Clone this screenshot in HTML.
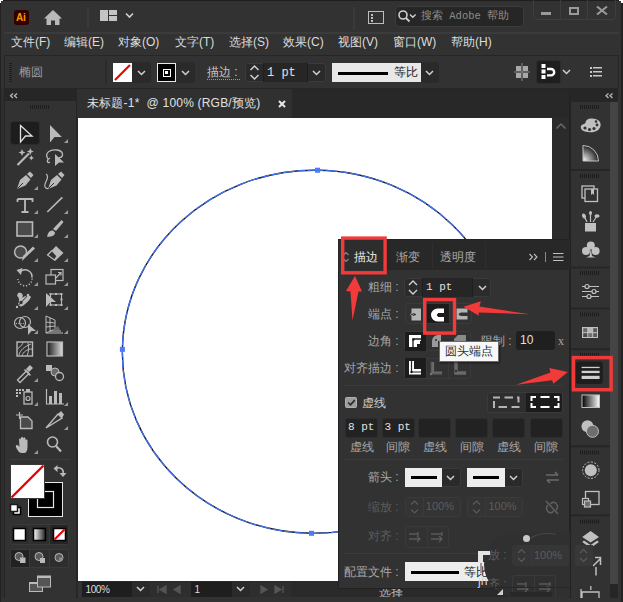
<!DOCTYPE html>
<html><head><meta charset="utf-8">
<style>
*{margin:0;padding:0;box-sizing:border-box}
html,body{width:623px;height:602px;overflow:hidden;background:#2b2b2b;font-family:"Liberation Sans",sans-serif;color:#d0d0d0}
.a{position:absolute}
.t{position:absolute;white-space:nowrap;line-height:1}
</style></head><body>
<!-- window frame -->
<div class="a" style="left:0;top:0;width:623px;height:602px;background:#323232"></div>
<div class="a" style="left:0;top:0;width:623px;height:1px;background:#1e1e1e"></div>
<div class="a" style="left:0;top:0;width:1px;height:602px;background:#222"></div>
<div class="a" style="left:621px;top:0;width:2px;height:602px;background:#222"></div>


<!-- TITLE BAR -->
<div class="a" style="left:14px;top:10px;width:15px;height:15px;background:#330000;border-radius:3px"></div>
<div class="t" style="left:16px;top:12.5px;font-size:10px;font-weight:bold;color:#ff9a00;letter-spacing:-0.3px">Ai</div>
<svg class="a" style="left:43px;top:9px" width="20" height="17" viewBox="0 0 20 17"><path d="M10 1 L19 9.5 L16.5 9.5 L16.5 16 L12 16 L12 11.5 L8 11.5 L8 16 L3.5 16 L3.5 9.5 L1 9.5 Z" fill="#b8b8b8"/></svg>
<div class="a" style="left:87px;top:7px;width:2px;height:20px;background:#3a3a3a"></div>
<div class="a" style="left:100px;top:10px;width:8px;height:11px;background:#c4c4c4"></div>
<div class="a" style="left:109px;top:10px;width:8px;height:5px;background:#c4c4c4"></div>
<div class="a" style="left:109px;top:16px;width:8px;height:5px;background:#c4c4c4"></div>
<svg class="a" style="left:125px;top:12px" width="9" height="7" viewBox="0 0 9 7"><path d="M1 1.5 L4.5 5 L8 1.5" stroke="#d0d0d0" stroke-width="1.6" fill="none"/></svg>
<div class="a" style="left:353px;top:7px;width:2px;height:23px;background:#3a3a3a"></div>
<div class="a" style="left:368px;top:11px;width:16px;height:13px;border:1.5px solid #bdbdbd"></div>
<div class="a" style="left:371px;top:14px;width:2px;height:2px;background:#bdbdbd"></div>
<div class="a" style="left:371px;top:17px;width:2px;height:2px;background:#bdbdbd"></div>
<div class="a" style="left:371px;top:20px;width:2px;height:2px;background:#bdbdbd"></div>
<div class="a" style="left:395px;top:6px;width:129px;height:21px;background:#262626;border:1px solid #3c3c3c;border-radius:4px"></div>
<svg class="a" style="left:397px;top:9px" width="20" height="15" viewBox="0 0 20 15"><circle cx="6" cy="6" r="4" stroke="#cfcfcf" stroke-width="1.6" fill="none"/><path d="M9 9 L12.5 12.5" stroke="#cfcfcf" stroke-width="1.8"/><path d="M13 5.5 L15.8 8.3 L18.6 5.5" stroke="#cfcfcf" stroke-width="1.4" fill="none"/></svg>
<div class="t" style="left:421px;top:11px;font-family:'Liberation Mono',monospace;font-size:10.5px;color:#8c8c8c">搜索 Adobe 帮助</div>
<div class="a" style="left:533px;top:-2px;width:83px;height:22px;border:1px solid #3e3e3e;border-radius:0 0 4px 4px"></div>
<div class="a" style="left:560px;top:0;width:1px;height:19px;background:#3e3e3e"></div>
<div class="a" style="left:587px;top:0;width:1px;height:19px;background:#3e3e3e"></div>
<div class="a" style="left:541px;top:12px;width:10px;height:3px;background:#9a9a9a"></div>
<div class="a" style="left:569px;top:7px;width:10px;height:8px;border:2px solid #9a9a9a"></div>
<svg class="a" style="left:596px;top:6px" width="12" height="9" viewBox="0 0 12 9"><path d="M1 0.5 L11 8.5 M11 0.5 L1 8.5" stroke="#9a9a9a" stroke-width="2"/></svg>

<!-- MENU -->
<div class="t" style="left:11px;top:36px;font-size:12px;color:#dcdcdc">文件(F)</div>
<div class="t" style="left:64px;top:36px;font-size:12px;color:#dcdcdc">编辑(E)</div>
<div class="t" style="left:118px;top:36px;font-size:12px;color:#dcdcdc">对象(O)</div>
<div class="t" style="left:175px;top:36px;font-size:12px;color:#dcdcdc">文字(T)</div>
<div class="t" style="left:229px;top:36px;font-size:12px;color:#dcdcdc">选择(S)</div>
<div class="t" style="left:283px;top:36px;font-size:12px;color:#dcdcdc">效果(C)</div>
<div class="t" style="left:338px;top:36px;font-size:12px;color:#dcdcdc">视图(V)</div>
<div class="t" style="left:393px;top:36px;font-size:12px;color:#dcdcdc">窗口(W)</div>
<div class="t" style="left:451px;top:36px;font-size:12px;color:#dcdcdc">帮助(H)</div>

<!-- title separator -->
<div class="a" style="left:4px;top:32px;width:615px;height:2px;background:#3b3b3b"></div>

<!-- control bar -->
<div class="a" style="left:4px;top:55px;width:615px;height:34px;background:#323232;border:1px solid #262626"></div>


<!-- CONTROL BAR -->
<div class="a" style="left:9px;top:63px;width:3px;height:19px;background:repeating-linear-gradient(#1e1e1e 0 1px,transparent 1px 2px)"></div>
<div class="t" style="left:19px;top:66px;font-size:12px;color:#9c9c9c">椭圆</div>
<div class="a" style="left:105px;top:60px;width:2px;height:24px;background:#2a2a2a"></div>
<div class="a" style="left:113px;top:63px;width:19px;height:19px;background:#fff;overflow:hidden"><svg width="19" height="19"><path d="M2 17 L17 2" stroke="#e00" stroke-width="2.2"/></svg></div>
<div class="a" style="left:132px;top:62px;width:19px;height:21px;background:#2a2a2a;border-radius:0 3px 3px 0"></div>
<svg class="a" style="left:137px;top:70px" width="9" height="6" viewBox="0 0 9 6"><path d="M1 1 L4.5 4.5 L8 1" stroke="#d0d0d0" stroke-width="1.5" fill="none"/></svg>
<div class="a" style="left:157px;top:63px;width:19px;height:19px;background:#000;border:1px solid #e8e8e8"></div>
<div class="a" style="left:162.5px;top:68.5px;width:8.5px;height:8.5px;border:1.5px solid #fff"></div>
<div class="a" style="left:165.3px;top:71.3px;width:3px;height:3px;background:#fff"></div>
<div class="a" style="left:176px;top:62px;width:19px;height:21px;background:#2a2a2a;border-radius:0 3px 3px 0"></div>
<svg class="a" style="left:181px;top:70px" width="9" height="6" viewBox="0 0 9 6"><path d="M1 1 L4.5 4.5 L8 1" stroke="#d0d0d0" stroke-width="1.5" fill="none"/></svg>
<div class="t" style="left:207px;top:66px;font-size:12px;color:#c8c8c8">描边 :</div>
<div class="a" style="left:207px;top:79px;width:33px;height:1px;background:repeating-linear-gradient(90deg,#9a9a9a 0 1px,transparent 1px 2px)"></div>
<div class="a" style="left:245px;top:63px;width:81px;height:19px;background:#2a2a2a;border:1px solid #3a3a3a;border-radius:3px"></div>
<div class="a" style="left:263px;top:63px;width:45px;height:19px;background:#262626;border-left:1px solid #1e1e1e;border-right:1px solid #1e1e1e"></div>
<svg class="a" style="left:249px;top:64px" width="11" height="17" viewBox="0 0 11 17"><path d="M1.5 6 L5.5 2 L9.5 6 M1.5 11 L5.5 15 L9.5 11" stroke="#d0d0d0" stroke-width="1.5" fill="none"/></svg>
<div class="t" style="left:267px;top:67px;font-family:'Liberation Mono',monospace;font-size:12px;color:#e0e0e0">1 pt</div>
<svg class="a" style="left:312px;top:70px" width="9" height="6" viewBox="0 0 9 6"><path d="M1 1 L4.5 4.5 L8 1" stroke="#d0d0d0" stroke-width="1.5" fill="none"/></svg>
<div class="a" style="left:332px;top:63px;width:89px;height:19px;background:#e8e8e8"></div>
<div class="a" style="left:338px;top:72px;width:50px;height:3px;background:#000"></div>
<div class="t" style="left:394px;top:66px;font-size:12px;color:#222">等比</div>
<div class="a" style="left:421px;top:62px;width:18px;height:21px;background:#2a2a2a;border-radius:0 3px 3px 0"></div>
<svg class="a" style="left:425px;top:70px" width="9" height="6" viewBox="0 0 9 6"><path d="M1 1 L4.5 4.5 L8 1" stroke="#d0d0d0" stroke-width="1.5" fill="none"/></svg>
<svg class="a" style="left:513px;top:62px" width="18" height="20" viewBox="0 0 18 20"><rect x="3" y="4" width="5" height="5" fill="#a8a8a8"/><rect x="10" y="4" width="5" height="5" fill="#a8a8a8"/><rect x="3" y="11" width="5" height="5" fill="#a8a8a8"/><rect x="10" y="11" width="5" height="5" fill="#a8a8a8"/><path d="M9 1 V19 M1 10 H17" stroke="#8a8a8a" stroke-width="1"/></svg>
<div class="a" style="left:535.5px;top:59.5px;width:25px;height:24.5px;background:#1e1e1e;border:1px solid #2c2c2c;border-radius:3px"></div>
<svg class="a" style="left:540px;top:63px" width="18" height="17" viewBox="0 0 18 17"><rect x="1.5" y="1" width="4" height="4" fill="#fff"/><rect x="1.5" y="6.5" width="4" height="4" fill="#fff"/><rect x="1.5" y="12" width="4" height="4" fill="#fff"/><path d="M7 6 H11 A3.2 3.2 0 0 1 11 12.4 H7" stroke="#fff" stroke-width="2.4" fill="none"/></svg>
<svg class="a" style="left:562px;top:69px" width="9" height="6" viewBox="0 0 9 6"><path d="M1 1 L4.5 4.5 L8 1" stroke="#d0d0d0" stroke-width="1.5" fill="none"/></svg>
<svg class="a" style="left:590px;top:66px" width="12" height="11" viewBox="0 0 12 11"><rect x="0" y="1" width="2" height="2" fill="#c8c8c8"/><rect x="0" y="5" width="2" height="2" fill="#c8c8c8"/><rect x="0" y="9" width="2" height="2" fill="#c8c8c8"/><rect x="3" y="1" width="9" height="1.5" fill="#c8c8c8"/><rect x="3" y="5" width="9" height="1.5" fill="#c8c8c8"/><rect x="3" y="9" width="9" height="1.5" fill="#c8c8c8"/></svg>

<!-- toolbar -->
<div class="a" style="left:1px;top:89px;width:3px;height:509px;background:#2e2e2e"></div>
<div class="a" style="left:4px;top:89px;width:72px;height:509px;background:#323232;border-left:1px solid #262626"></div>
<div class="a" style="left:4px;top:89px;width:72px;height:12px;background:#262626"></div>


<!-- TOOLBAR ICONS -->
<svg class="a" style="left:0;top:0" width="80" height="602" viewBox="0 0 80 602">
<path d="M13 93.5 L10.5 95.8 L13 98 M17 93.5 L14.5 95.8 L17 98" fill="none" stroke="#b8b8b8" stroke-width="1.3"/>
<g fill="#1e1e1e"><rect x="30" y="105" width="1" height="4"/><rect x="32" y="105" width="1" height="4"/><rect x="34" y="105" width="1" height="4"/><rect x="36" y="105" width="1" height="4"/><rect x="38" y="105" width="1" height="4"/><rect x="40" y="105" width="1" height="4"/><rect x="42" y="105" width="1" height="4"/><rect x="44" y="105" width="1" height="4"/><rect x="46" y="105" width="1" height="4"/><rect x="48" y="105" width="1" height="4"/></g>
<rect x="10.5" y="121.5" width="29" height="23" rx="3" fill="#1d1d1d" stroke="#2c2c2c"/><path d="M20.5 125.5 L32 136 L25.5 136 L20.5 142 Z" fill="none" stroke="#e0e0e0" stroke-width="1.3" stroke-linejoin="miter"/><path d="M50 125 L61.8 137 L54.5 137 L50 142.5 Z" fill="#bababa"/><path d="M68 143 L68 139 L64 143 Z" fill="#9a9a9a"/><path d="M17.5 165 L29 153.5" stroke="#bababa" stroke-width="2.2"/><path d="M22 149 l1 2.5 2.5 1 -2.5 1 -1 2.5 -1 -2.5 -2.5 -1 2.5 -1z M30.3 148 l1 2.5 2.5 1 -2.5 1 -1 2.5 -1 -2.5 -2.5 -1 2.5 -1z M31.4 155.3 l0.8 1.8 1.8 0.8 -1.8 0.8 -0.8 1.8 -0.8 -1.8 -1.8 -0.8 1.8 -0.8z" fill="#bababa"/><path d="M48 159 C44 153 50 149 57 150 C64 151 64 157 59 158" fill="none" stroke="#bababa" stroke-width="1.3"/><path d="M50 158 C46 160 47 164 50 162" fill="none" stroke="#bababa" stroke-width="1.3"/><path d="M55 154 L64 162.5 L59 162.5 L55 166 Z" fill="#bababa"/><g transform="translate(0,0)"><path d="M17 189 L20 180 L26 175 L30.5 179.5 L25.5 185.5 Z" fill="#bababa"/><path d="M27 174 L30 171.5 L33.5 175 L31 178 Z" fill="#bababa"/><path d="M17.5 188.5 L23 183" stroke="#323232" stroke-width="1"/></g><path d="M38 190 L38 186 L34 190 Z" fill="#9a9a9a"/><g transform="translate(31,0)"><path d="M17 189 L20 180 L26 175 L30.5 179.5 L25.5 185.5 Z" fill="#bababa"/><path d="M27 174 L30 171.5 L33.5 175 L31 178 Z" fill="#bababa"/><path d="M17.5 188.5 L23 183" stroke="#323232" stroke-width="1"/></g><path d="M46 174 C50 176 46 181 45 184 C44 187 46 189 48.5 188.5" fill="none" stroke="#bababa" stroke-width="1.2"/><path d="M17.5 199 H32.5 V202 M17.5 199 V202 M25 199 V212 M21.5 212 H28.5" fill="none" stroke="#bababa" stroke-width="1.8"/><path d="M38 214 L38 210 L34 214 Z" fill="#9a9a9a"/><path d="M47.3 212 L62.3 197.4" stroke="#bababa" stroke-width="1.6"/><path d="M68 214 L68 210 L64 214 Z" fill="#9a9a9a"/><rect x="17" y="222" width="15.5" height="14" fill="#4a4a4a" stroke="#bababa" stroke-width="1.6"/><path d="M38 238 L38 234 L34 238 Z" fill="#9a9a9a"/><path d="M53 229 L61.5 220 L63.5 222 L56 231 Z" fill="#bababa"/><path d="M47 236.8 C48 232 50 230 53 230.5 L55 232.5 C55 236 51 237 47 236.8 Z" fill="#bababa"/><path d="M68 238 L68 234 L64 238 Z" fill="#9a9a9a"/><circle cx="20.6" cy="252" r="6" fill="#4a4a4a" stroke="#bababa" stroke-width="1.5"/><path d="M22 261 L23 256 L33 246.5 L35 248.5 L25 258 Z" fill="#bababa"/><path d="M38 262 L38 258 L34 262 Z" fill="#9a9a9a"/><path d="M47.5 255 L56 246 L63.5 253 L55 261 Z" fill="#bababa"/><path d="M47.5 255 L52 250.5 L57 256 L54.5 260 Z" fill="#323232" stroke="#bababa" stroke-width="1.2"/><path d="M68 262 L68 258 L64 262 Z" fill="#9a9a9a"/><path d="M20.5 271.5 A7 7 0 0 1 32 277.5" fill="none" stroke="#bababa" stroke-width="1.6"/><path d="M32 278.5 A7 7 0 0 1 18 279" fill="none" stroke="#bababa" stroke-width="1.5" stroke-dasharray="1.2 1.8"/><path d="M16.5 270 L22.5 268 L21 275 Z" fill="#bababa"/><path d="M38 286 L38 282 L34 286 Z" fill="#9a9a9a"/><rect x="51" y="269.5" width="12" height="11" fill="none" stroke="#bababa" stroke-width="1.2"/><rect x="46" y="275" width="9.5" height="9" fill="#323232" stroke="#bababa" stroke-width="1.2"/><path d="M56 278 L61 272.5 M58 272.5 H61 V275.5" fill="none" stroke="#bababa" stroke-width="1.2"/><path d="M68 286 L68 282 L64 286 Z" fill="#9a9a9a"/><path d="M18 293 C22 292 24 295 22 298 C25 296 29 294 31 297 C30 299 28 302 24 305 C22 307 19 307 18 304 C20 301 19 297 17 296 Z" fill="#bababa"/><path d="M17 307 L28 295" stroke="#323232" stroke-width="1"/><circle cx="21" cy="302.5" r="1.7" fill="#323232"/><circle cx="17" cy="307" r="1.2" fill="#bababa"/><circle cx="28" cy="295" r="1.2" fill="#bababa"/><path d="M38 310 L38 306 L34 310 Z" fill="#9a9a9a"/><path d="M46 293 L56 302 L50.5 302 L46 307 Z" fill="#bababa"/><rect x="50.5" y="294" width="11" height="11" fill="none" stroke="#bababa" stroke-width="1.1"/><g fill="#bababa"><rect x="49.5" y="293" width="2" height="2"/><rect x="60.5" y="293" width="2" height="2"/><rect x="49.5" y="304" width="2" height="2"/><rect x="60.5" y="304" width="2" height="2"/><rect x="55" y="293" width="2" height="2"/><rect x="55" y="304" width="2" height="2"/><rect x="60.5" y="298.5" width="2" height="2"/></g><path d="M68 310 L68 306 L64 310 Z" fill="#9a9a9a"/><circle cx="20" cy="323" r="5.5" fill="none" stroke="#bababa" stroke-width="1.2"/><circle cx="25" cy="322" r="5.5" fill="none" stroke="#bababa" stroke-width="1.2"/><path d="M16 323.5 H26" stroke="#bababa" stroke-width="1" stroke-dasharray="1 1.3"/><path d="M28 324 L36 331 L31.5 331 L28 335 Z" fill="#bababa"/><path d="M38 334 L38 330 L34 334 Z" fill="#9a9a9a"/><path d="M46 316 L55 320 L55 329 L46 333 Z M46 322 L55 323 M46 327 L55 326 M50 318 V331" fill="none" stroke="#bababa" stroke-width="1"/><path d="M52 330 L60 330 L58 326 Z" fill="#6a6a6a"/><path d="M46 333 H63 M50 331 H61" stroke="#bababa" stroke-width="1"/><path d="M68 334 L68 330 L64 334 Z" fill="#9a9a9a"/><rect x="17" y="342" width="15.5" height="14" fill="none" stroke="#bababa" stroke-width="1.4"/><path d="M19 355 C20 350 24 347 31 344 M17.5 349 C21 346 23 344 23 342 M22 356 C23 352 27 349 32 349 M28 343 C29 347 29 351 27 356" fill="none" stroke="#bababa" stroke-width="1"/><defs><linearGradient id="gr" x1="0" x2="1"><stop offset="0" stop-color="#1a1a1a"/><stop offset="1" stop-color="#dcdcdc"/></linearGradient></defs><rect x="47" y="342" width="15.5" height="14" fill="url(#gr)" stroke="#bababa" stroke-width="1.2"/><path d="M17.5 380 L26.5 371 L29 373.5 L20 382.5 Z" fill="none" stroke="#bababa" stroke-width="1.3"/><path d="M26 369 L30 365 L33 368 L29 372 Z" fill="#bababa"/><path d="M24.5 369.5 L30.5 375.5" stroke="#bababa" stroke-width="1.5"/><path d="M38 382 L38 378 L34 382 Z" fill="#9a9a9a"/><rect x="46" y="365" width="6" height="6" fill="#bababa"/><circle cx="55" cy="372" r="4" fill="#6a6a6a" stroke="#bababa" stroke-width="1"/><circle cx="59.5" cy="376.5" r="4" fill="#323232" stroke="#bababa" stroke-width="1.3"/><g fill="#bababa"><rect x="16" y="389" width="2" height="2"/><rect x="19" y="389" width="2" height="2"/><rect x="22" y="389" width="2" height="2"/><rect x="16" y="392" width="2" height="2"/><rect x="19" y="392" width="2" height="2"/><rect x="16" y="395" width="2" height="2"/></g><rect x="24" y="392" width="8" height="12" fill="none" stroke="#bababa" stroke-width="1.3"/><rect x="26" y="389" width="4" height="3" fill="#bababa"/><circle cx="28" cy="398.5" r="2" fill="none" stroke="#bababa" stroke-width="1.2"/><path d="M38 406 L38 402 L34 406 Z" fill="#9a9a9a"/><path d="M46.5 389 V404 H64" fill="none" stroke="#bababa" stroke-width="1.2"/><rect x="49" y="396" width="3" height="8" fill="#bababa"/><rect x="54" y="391" width="3" height="13" fill="#bababa"/><rect x="59" y="393" width="3" height="11" fill="#bababa"/><path d="M68 406 L68 402 L64 406 Z" fill="#9a9a9a"/><path d="M16 415 H23 M19.5 412 V419" stroke="#bababa" stroke-width="1.2"/><path d="M20.5 417 H28 L32 421 V428.5 H20.5 Z" fill="#4a4a4a" stroke="#bababa" stroke-width="1.3"/><path d="M46 428 L58 414 L62 418 Z" fill="none" stroke="#bababa" stroke-width="1.4"/><path d="M58 414 L61 411 L64 414.5 L62 418 Z" fill="#bababa"/><path d="M68 430 L68 426 L64 430 Z" fill="#9a9a9a"/><path d="M19 452 C16 448 15 446 16.5 445 C18 444.5 19 446 19.5 447 L19 439.5 C19 438 21 438 21 439.5 V444 V438 C21 436.5 23.3 436.5 23.3 438 V444 V438.7 C23.3 437.2 25.5 437.2 25.5 438.7 V445 V440.5 C25.5 439 27.5 439 27.5 440.5 V447 C27.5 451 26 453 24 453 H21 Z" fill="#bababa"/><path d="M38 454 L38 450 L34 454 Z" fill="#9a9a9a"/><circle cx="52.5" cy="442" r="5" fill="none" stroke="#bababa" stroke-width="1.6"/><path d="M56 446 L61 451.5" stroke="#bababa" stroke-width="2.2"/>
<path d="M10 459.5 H70" stroke="#3d3d3d" stroke-width="1"/>
</svg>


<!-- TOOLBAR BOTTOM -->
<svg class="a" style="left:0;top:0" width="80" height="602" viewBox="0 0 80 602">
<rect x="28.5" y="482.5" width="34" height="34" fill="#000" stroke="#e6e6e6" stroke-width="1"/>
<rect x="37.5" y="491.5" width="16" height="16" fill="none" stroke="#e6e6e6" stroke-width="1.2"/>
<rect x="10.5" y="464.5" width="34" height="34" fill="#fff" stroke="#3a3a3a" stroke-width="1"/>
<path d="M11.5 497.5 L43.5 465.5" stroke="#e8000b" stroke-width="2.4"/>
<path d="M56 468 C62 467 64 470 63 474" fill="none" stroke="#bababa" stroke-width="1.6"/><path d="M53.5 468.5 L57.5 465 V472 Z M59.5 473 H66.5 L63 477 Z" fill="#bababa"/>
<rect x="13.5" y="507.5" width="7" height="7" fill="#fff" stroke="#000" stroke-width="1.5"/>
<rect x="10.5" y="504.5" width="7" height="7" fill="#fff" stroke="#1a1a1a" stroke-width="1.5"/>
<rect x="10.5" y="505" width="11" height="11" fill="none" stroke="#bababa" stroke-width="0.8" opacity="0"/>
<rect x="10.5" y="524.5" width="58" height="20" rx="2" fill="#2e2e2e" stroke="#3a3a3a"/>
<path d="M30 525 V544 M49.5 525 V544" stroke="#3a3a3a"/>
<rect x="50" y="525" width="18" height="19" fill="#252525"/>
<rect x="13.5" y="528.5" width="12" height="12" fill="#fff" stroke="#000" stroke-width="1.5"/>
<defs><linearGradient id="gr2" x1="0" x2="1"><stop offset="0" stop-color="#fff"/><stop offset="1" stop-color="#222"/></linearGradient></defs>
<rect x="33.5" y="528.5" width="12" height="12" fill="url(#gr2)" stroke="#000" stroke-width="1.5"/>
<rect x="53.5" y="528.5" width="12" height="12" fill="#fff" stroke="#000" stroke-width="1.5"/>
<path d="M54.5 539.5 L64.5 529.5" stroke="#e8000b" stroke-width="2.2"/>
<rect x="10.5" y="549.5" width="58" height="18" rx="2" fill="#2e2e2e" stroke="#3a3a3a"/>
<path d="M29.5 550 V567 M49.5 550 V567" stroke="#3a3a3a"/>
<rect x="11" y="550" width="18" height="17" fill="#222"/>
<circle cx="19" cy="556.5" r="4" fill="#5a5a5a" stroke="#bababa" stroke-width="1"/><rect x="20" y="557.5" width="5.5" height="5.5" fill="#bababa"/>
<circle cx="39" cy="556.5" r="4" fill="#5a5a5a" stroke="#bababa" stroke-width="1"/><path d="M40 558 H45 V563 H40 Z" fill="#bababa"/>
<circle cx="59" cy="557.5" r="4" fill="#5a5a5a" stroke="#bababa" stroke-width="1"/><path d="M59 557.5 H63 A4 4 0 0 1 59 561.5 Z" fill="#8a8a8a"/>
<rect x="29.5" y="582.5" width="13" height="9" fill="#555" stroke="#bababa" stroke-width="1"/>
<rect x="37.5" y="576" width="13" height="11" fill="#555" stroke="#bababa" stroke-width="1"/>
<rect x="37.5" y="576" width="13" height="2" fill="#bababa"/><rect x="29.5" y="582.5" width="8" height="1.5" fill="#bababa"/>
</svg>

<div class="a" style="left:76px;top:89px;width:1.5px;height:509px;background:#252525"></div>
<!-- tab bar -->
<div class="a" style="left:77px;top:89px;width:493px;height:29px;background:#282828"></div>
<div class="a" style="left:77px;top:89px;width:215px;height:29px;background:#303030"></div>


<!-- TAB -->
<div class="t" style="left:87px;top:97px;font-size:12px;color:#e0e0e0;letter-spacing:0.2px">未标题-1*&nbsp; @ 100% (RGB/预览)</div>
<svg class="a" style="left:278px;top:100px" width="8" height="8" viewBox="0 0 8 8"><path d="M1 1 L7 7 M7 1 L1 7" stroke="#e8e8e8" stroke-width="2"/></svg>

<!-- canvas -->
<div class="a" style="left:77px;top:118px;width:493px;height:463px;background:#282828"></div>
<div class="a" style="left:78px;top:118px;width:474px;height:463px;background:#fff"></div>
<div class="a" style="left:552px;top:118px;width:17px;height:463px;background:#2b2b2b"></div>

<!-- status bar -->
<div class="a" style="left:77px;top:581px;width:493px;height:16px;background:#2a2a2a"></div>


<!-- CIRCLE -->
<svg class="a" style="left:0;top:0" width="623" height="602" viewBox="0 0 623 602">
<path d="M317.5 170.2 C211.4 168.9 124.1 249.1 122.4 349.4 C120.7 449.7 205.4 532.0 311.5 533.3 C417.6 534.6 504.9 454.4 506.6 354.1 C508.3 253.8 423.6 171.5 317.5 170.2 Z" fill="none" stroke="#1a1a1a" stroke-width="1.4"/>
<path d="M317.5 170.2 C211.4 168.9 124.1 249.1 122.4 349.4 C120.7 449.7 205.4 532.0 311.5 533.3 C417.6 534.6 504.9 454.4 506.6 354.1 C508.3 253.8 423.6 171.5 317.5 170.2 Z" fill="none" stroke="#4172f4" stroke-width="1.3" stroke-dasharray="10 2 8 2.5 12 2"/>
<rect x="315.0" y="167.7" width="5" height="5" fill="#4a7bff"/><rect x="119.9" y="346.9" width="5" height="5" fill="#4a7bff"/><rect x="309.0" y="530.8" width="5" height="5" fill="#4a7bff"/><rect x="504.1" y="351.6" width="5" height="5" fill="#4a7bff"/>
</svg>

<!-- STATUS BAR -->
<div class="a" style="left:82px;top:582px;width:50px;height:15px;background:#1e1e1e"></div>
<div class="a" style="left:78px;top:582px;width:3.5px;height:15px;background:#343434"></div>
<div class="t" style="left:85.5px;top:585px;font-size:10px;color:#dcdcdc;letter-spacing:-0.4px">100%</div>
<svg class="a" style="left:136px;top:586px" width="9" height="6" viewBox="0 0 9 6"><path d="M1 1 L4.5 4.5 L8 1" stroke="#d0d0d0" stroke-width="1.5" fill="none"/></svg>
<div class="a" style="left:150px;top:582px;width:41px;height:15px;background:#2e2e2e"></div>
<svg class="a" style="left:150px;top:582px" width="41" height="15" viewBox="0 0 41 15"><path d="M8 4 V11 M16 4 L10 7.5 L16 11 Z M30 4 L24 7.5 L30 11 Z" stroke="#555" fill="#555" stroke-width="1.3"/></svg>
<div class="a" style="left:191px;top:582px;width:41px;height:15px;background:#1e1e1e"></div>
<div class="t" style="left:194.5px;top:585px;font-size:10px;color:#dcdcdc">1</div>
<svg class="a" style="left:236px;top:586px" width="9" height="6" viewBox="0 0 9 6"><path d="M1 1 L4.5 4.5 L8 1" stroke="#d0d0d0" stroke-width="1.5" fill="none"/></svg>
<div class="a" style="left:250px;top:582px;width:41px;height:15px;background:#2e2e2e"></div>
<svg class="a" style="left:250px;top:582px" width="41" height="15" viewBox="0 0 41 15"><path d="M11 4 L17 7.5 L11 11 Z M25 4 L31 7.5 L25 11 Z M33 4 V11" stroke="#555" fill="#555" stroke-width="1.3"/></svg>
<svg class="a" style="left:555px;top:122px" width="12" height="8" viewBox="0 0 12 8"><path d="M1.5 6.5 L6 2 L10.5 6.5" stroke="#6a6a6a" stroke-width="1.5" fill="none"/></svg>

<!-- right strip -->
<div class="a" style="left:569px;top:89px;width:2px;height:509px;background:#222"></div>
<!-- RIGHT STRIP -->
<svg class="a" style="left:0;top:0" width="623" height="602" viewBox="0 0 623 602"><rect x="570" y="89" width="48" height="13" fill="#262626"/>
<path d="M608.5 93.5 L606 95.8 L608.5 98 M612.5 93.5 L610 95.8 L612.5 98" fill="none" stroke="#b8b8b8" stroke-width="1.3"/>
<rect x="571" y="102" width="39" height="496" fill="#323232"/>
<rect x="610" y="102" width="8" height="482" fill="#454545"/>
<rect x="610" y="584" width="8" height="14" fill="#262626"/>
<rect x="571" y="169" width="39" height="2" fill="#262626"/>
<rect x="571" y="266.5" width="39" height="2" fill="#262626"/>
<rect x="571" y="307.5" width="39" height="2" fill="#262626"/>
<rect x="571" y="348.2" width="39" height="2" fill="#262626"/>
<rect x="571" y="445.3" width="39" height="2" fill="#262626"/>
<rect x="571" y="514.4" width="39" height="2" fill="#262626"/>
<g fill="#1c1c1c"><rect x="580" y="105" width="1" height="4"/><rect x="582" y="105" width="1" height="4"/><rect x="584" y="105" width="1" height="4"/><rect x="586" y="105" width="1" height="4"/><rect x="588" y="105" width="1" height="4"/><rect x="590" y="105" width="1" height="4"/><rect x="592" y="105" width="1" height="4"/><rect x="594" y="105" width="1" height="4"/><rect x="596" y="105" width="1" height="4"/><rect x="598" y="105" width="1" height="4"/></g>
<g fill="#1c1c1c"><rect x="580" y="174" width="1" height="4"/><rect x="582" y="174" width="1" height="4"/><rect x="584" y="174" width="1" height="4"/><rect x="586" y="174" width="1" height="4"/><rect x="588" y="174" width="1" height="4"/><rect x="590" y="174" width="1" height="4"/><rect x="592" y="174" width="1" height="4"/><rect x="594" y="174" width="1" height="4"/><rect x="596" y="174" width="1" height="4"/><rect x="598" y="174" width="1" height="4"/></g>
<g fill="#1c1c1c"><rect x="580" y="271" width="1" height="4"/><rect x="582" y="271" width="1" height="4"/><rect x="584" y="271" width="1" height="4"/><rect x="586" y="271" width="1" height="4"/><rect x="588" y="271" width="1" height="4"/><rect x="590" y="271" width="1" height="4"/><rect x="592" y="271" width="1" height="4"/><rect x="594" y="271" width="1" height="4"/><rect x="596" y="271" width="1" height="4"/><rect x="598" y="271" width="1" height="4"/></g>
<g fill="#1c1c1c"><rect x="580" y="312.5" width="1" height="4"/><rect x="582" y="312.5" width="1" height="4"/><rect x="584" y="312.5" width="1" height="4"/><rect x="586" y="312.5" width="1" height="4"/><rect x="588" y="312.5" width="1" height="4"/><rect x="590" y="312.5" width="1" height="4"/><rect x="592" y="312.5" width="1" height="4"/><rect x="594" y="312.5" width="1" height="4"/><rect x="596" y="312.5" width="1" height="4"/><rect x="598" y="312.5" width="1" height="4"/></g>
<g fill="#1c1c1c"><rect x="580" y="353" width="1" height="4"/><rect x="582" y="353" width="1" height="4"/><rect x="584" y="353" width="1" height="4"/><rect x="586" y="353" width="1" height="4"/><rect x="588" y="353" width="1" height="4"/><rect x="590" y="353" width="1" height="4"/><rect x="592" y="353" width="1" height="4"/><rect x="594" y="353" width="1" height="4"/><rect x="596" y="353" width="1" height="4"/><rect x="598" y="353" width="1" height="4"/></g>
<g fill="#1c1c1c"><rect x="580" y="450.5" width="1" height="4"/><rect x="582" y="450.5" width="1" height="4"/><rect x="584" y="450.5" width="1" height="4"/><rect x="586" y="450.5" width="1" height="4"/><rect x="588" y="450.5" width="1" height="4"/><rect x="590" y="450.5" width="1" height="4"/><rect x="592" y="450.5" width="1" height="4"/><rect x="594" y="450.5" width="1" height="4"/><rect x="596" y="450.5" width="1" height="4"/><rect x="598" y="450.5" width="1" height="4"/></g>
<g fill="#1c1c1c"><rect x="580" y="519.5" width="1" height="4"/><rect x="582" y="519.5" width="1" height="4"/><rect x="584" y="519.5" width="1" height="4"/><rect x="586" y="519.5" width="1" height="4"/><rect x="588" y="519.5" width="1" height="4"/><rect x="590" y="519.5" width="1" height="4"/><rect x="592" y="519.5" width="1" height="4"/><rect x="594" y="519.5" width="1" height="4"/><rect x="596" y="519.5" width="1" height="4"/><rect x="598" y="519.5" width="1" height="4"/></g>
<path d="M591 118.5 C598 118 601.5 122 600.5 126 C599.5 130 596 132.5 590 132.3 C584 132 580.5 130 580.8 127 C581 124 585 124.5 585.5 122.5 C586 120 587.5 118.7 591 118.5 Z" fill="#c0c0c0"/><g fill="#323232"><circle cx="585" cy="128" r="1.6"/><circle cx="589.5" cy="129.5" r="1.6"/><circle cx="594" cy="128.5" r="1.6"/><circle cx="597" cy="125" r="1.4"/><circle cx="596" cy="121.5" r="1.3"/></g>
<defs><radialGradient id="cg" cx="0" cy="1" r="1"><stop offset="0" stop-color="#fff"/><stop offset="1" stop-color="#222"/></radialGradient></defs>
<path d="M583 161 V145.5 A15.5 15.5 0 0 1 598.5 161 Z" fill="url(#cg)" stroke="#c0c0c0" stroke-width="1"/>
<rect x="582" y="186" width="12" height="12" fill="none" stroke="#c0c0c0" stroke-width="1.3"/><rect x="585" y="189" width="12.5" height="12.5" fill="#323232" stroke="#c0c0c0" stroke-width="1.3"/><path d="M591 189 V195 L592.5 193.5 L594 195 V189" fill="#c0c0c0"/>
<rect x="585" y="223" width="11" height="8.5" fill="#c0c0c0"/><path d="M590.5 222 V213 M587 222 L584 216 M593 222 L597 216" stroke="#c0c0c0" stroke-width="1.2"/><ellipse cx="590.5" cy="213" rx="1.5" ry="2" fill="#c0c0c0"/><ellipse cx="584" cy="216" rx="1.8" ry="2.5" fill="#c0c0c0" transform="rotate(-30 584 216)"/><ellipse cx="597" cy="216" rx="2.6" ry="1.8" fill="#c0c0c0"/>
<circle cx="590.8" cy="245.5" r="4" fill="#c0c0c0"/><circle cx="586" cy="251" r="4" fill="#c0c0c0"/><circle cx="595.6" cy="251" r="4" fill="#c0c0c0"/><path d="M590.8 249 L589.5 256 L586 257.5 H595.6 L592 256 Z" fill="#c0c0c0"/>
<path d="M582 286.5 H599 M582 291.5 H599 M582 296.5 H599" stroke="#c0c0c0" stroke-width="1.2"/><g fill="#323232" stroke="#c0c0c0" stroke-width="1.2"><circle cx="587" cy="286.5" r="2"/><circle cx="594" cy="291.5" r="2"/><circle cx="589" cy="296.5" r="2"/></g>
<rect x="582" y="327" width="16" height="11" fill="#c0c0c0"/><g><rect x="583.2" y="328.2" width="4" height="4" fill="#6a6a6a"/><rect x="588.2" y="328.2" width="4" height="4" fill="#b8b8b8"/><rect x="593.2" y="328.2" width="3.8" height="4" fill="#5a5a5a"/><rect x="583.2" y="333.2" width="4" height="3.8" fill="#4a4a4a"/><rect x="588.2" y="333.2" width="4" height="3.8" fill="#707070"/><rect x="593.2" y="333.2" width="3.8" height="3.8" fill="#5a5a5a"/></g>
<rect x="575.8" y="361.6" width="27" height="22.5" rx="3" fill="#1e1e1e"/>
<rect x="581.6" y="366.8" width="18" height="1.3" fill="#d0d0d0"/><rect x="581.6" y="370.8" width="18" height="2.3" fill="#d0d0d0"/><rect x="581.6" y="375.8" width="18" height="3.2" fill="#d0d0d0"/>
<defs><linearGradient id="gg" x1="0" x2="1"><stop offset="0" stop-color="#000"/><stop offset="1" stop-color="#fff"/></linearGradient></defs>
<rect x="582" y="395" width="17.5" height="12.5" fill="url(#gg)" stroke="#c0c0c0" stroke-width="1"/>
<circle cx="587.5" cy="426.3" r="6" fill="#c0c0c0"/><circle cx="592.5" cy="431.3" r="6" fill="#6e6e6e" stroke="#c0c0c0" stroke-width="1"/>
<circle cx="590.8" cy="470.2" r="8.2" fill="none" stroke="#c0c0c0" stroke-width="1" stroke-dasharray="2 1.5"/><circle cx="590.8" cy="470.2" r="6" fill="#c0c0c0"/>
<rect x="585.5" y="491.5" width="13.5" height="13" fill="none" stroke="#c0c0c0" stroke-width="1.3"/><rect x="582.5" y="498.5" width="6" height="6" fill="#323232" stroke="#c0c0c0" stroke-width="1.2"/><rect x="584.5" y="501" width="6" height="6" fill="#6e6e6e" stroke="#c0c0c0" stroke-width="1.2"/>
<path d="M590.6 531 L599 537 L590.6 542.5 L582.2 537 Z" fill="#c0c0c0"/><path d="M584 540.5 L590.6 545 L597.2 540.5 L599 542 L590.6 548 L582.2 542 Z" fill="#c0c0c0"/>
<path d="M595 557.5 H600.5 V565 M593 566 L600 559 M596 567 V575.5" stroke="#c0c0c0" stroke-width="1.5" fill="none"/>
<path d="M590.8 586 V590 M582 598 V592 H599 V598 M581 589 V598" stroke="#c0c0c0" stroke-width="1.3" fill="none"/>
<rect x="573.4" y="357.6" width="37.7" height="32.1" fill="none" stroke="#ef3a3a" stroke-width="3.5"/></svg>


<!-- stroke panel -->
<!-- STROKE PANEL -->
<div class="a" style="left:338px;top:239px;width:232px;height:350px;background:#323232;border:1px solid #222"></div>
<div class="a" style="left:338px;top:240px;width:232px;height:30px;background:#282828"></div>
<div class="a" style="left:339px;top:240px;width:46px;height:30px;background:#2d2d2d"></div>
<div class="a" style="left:432px;top:242px;width:1px;height:26px;background:#2f2f2f"></div>
<div class="a" style="left:485px;top:242px;width:1px;height:26px;background:#2f2f2f"></div>
<svg class="a" style="left:342px;top:250px" width="8" height="14" viewBox="0 0 8 14"><path d="M1.5 5 L4 2.5 L6.5 5 M1.5 9 L4 11.5 L6.5 9" stroke="#8a8a8a" stroke-width="1.2" fill="none"/></svg>
<div class="t" style="left:354px;top:251px;font-size:12px;color:#ececec;">描边</div>
<div class="t" style="left:396px;top:251px;font-size:12px;color:#a8a8a8;">渐变</div>
<div class="t" style="left:440px;top:251px;font-size:12px;color:#a8a8a8;">透明度</div>
<svg class="a" style="left:528px;top:251px" width="38" height="12" viewBox="0 0 38 12"><path d="M1.5 3 L4.5 6 L1.5 9 M6 3 L9 6 L6 9" stroke="#c0c0c0" stroke-width="1.1" fill="none"/><path d="M17.5 1 V11" stroke="#8a8a8a" stroke-width="1"/><path d="M25 2.5 H35.5 M25 6 H35.5 M25 9.5 H35.5" stroke="#c0c0c0" stroke-width="1.1"/></svg>
<div class="t" style="left:368px;top:281px;font-size:12px;color:#a8a8a8;">粗细 :</div>
<div class="a" style="left:404px;top:278px;width:87px;height:19px;background:#2b2b2b;border:1px solid #3a3a3a;border-radius:3px"></div>
<div class="a" style="left:422px;top:278px;width:51px;height:19px;background:#262626;border-left:1px solid #1e1e1e;border-right:1px solid #1e1e1e"></div>
<svg class="a" style="left:407px;top:279px" width="12" height="17" viewBox="0 0 12 17"><path d="M2 6 L6 2 L10 6 M2 11 L6 15 L10 11" stroke="#d0d0d0" stroke-width="1.4" fill="none"/></svg>
<div class="t" style="left:426px;top:282px;font-size:11px;color:#e0e0e0;font-family:'Liberation Mono',monospace">1 pt</div>
<svg class="a" style="left:478px;top:285px" width="9" height="6" viewBox="0 0 9 6"><path d="M1 1 L4.5 4.5 L8 1" stroke="#d0d0d0" stroke-width="1.5" fill="none"/></svg>
<div class="a" style="left:404.5px;top:303px;width:67px;height:21px;border:1px solid #3a3a3a;border-radius:3px"></div>
<div class="a" style="left:426.5px;top:303.8px;width:22.5px;height:19.5px;background:#1c1c1c"></div>
<div class="a" style="left:449px;top:304px;width:1px;height:19px;background:#3a3a3a"></div>
<div class="t" style="left:368px;top:308px;font-size:12px;color:#a8a8a8;">端点 :</div>
<svg class="a" style="left:404px;top:303px" width="68" height="22" viewBox="0 0 68 22">
<path d="M7.5 5.5 H17 V17.5 H7.5 V13 H10.5 V10 H7.5 Z" fill="#b4b4b4"/><path d="M7.5 11.5 H12" stroke="#323232" stroke-width="1.2"/><circle cx="8" cy="11.5" r="1.3" fill="#323232" stroke="#b4b4b4" stroke-width="0.8"/>
<path d="M40 5.5 H33.5 A6 6 0 0 0 33.5 18.5 H40 V14 H34 V10 H40 Z" fill="#ffffff"/><circle cx="34" cy="12" r="1.2" fill="#1c1c1c"/>
<path d="M52.5 5.5 H63.5 V9.5 H56.5 V13 H63.5 V16.5 H52.5 Z" fill="#b4b4b4"/><circle cx="56" cy="11.2" r="1.2" fill="#323232"/>
</svg>
<div class="t" style="left:368px;top:335px;font-size:12px;color:#a8a8a8;">边角 :</div>
<div class="a" style="left:404px;top:331px;width:67px;height:20px;border:1px solid #3a3a3a;border-radius:3px"></div>
<div class="a" style="left:404.5px;top:331.5px;width:21.5px;height:19px;background:#1c1c1c"></div>
<svg class="a" style="left:404px;top:331px" width="68" height="20" viewBox="0 0 68 20">
<path d="M5 4 H17 V10 H13 V16 H5 Z" fill="#fff"/><path d="M9 16 V8 H17" stroke="#1c1c1c" stroke-width="1.3" fill="none"/><rect x="13" y="10" width="3" height="3" fill="#fff"/><circle cx="9.5" cy="8.5" r="1.2" fill="#1c1c1c"/>
<path d="M28 16 V10 A6 6 0 0 1 34 4 H37 V10 H34 V16 Z" fill="#9a9a9a"/><circle cx="32" cy="9" r="1.1" fill="#323232"/>
<path d="M50 16 V8 L54 4 H62 V10 H56 V16 Z" fill="#8a8a8a"/>
</svg>
<div class="t" style="left:481px;top:335px;font-size:12px;color:#a8a8a8;">限制 :</div>
<div class="a" style="left:516px;top:331px;width:39px;height:19px;background:#1f1f1f;border-radius:3px"></div>
<div class="t" style="left:520px;top:334px;font-size:12px;color:#e0e0e0;">10</div>
<div class="t" style="left:558px;top:335px;font-size:12px;color:#a8a8a8;font-family:'Liberation Serif',serif">x</div>
<div class="t" style="left:344px;top:362px;font-size:12px;color:#a8a8a8;">对齐描边 :</div>
<div class="a" style="left:404px;top:357.5px;width:67px;height:21px;border:1px solid #3a3a3a;border-radius:3px"></div>
<div class="a" style="left:404.5px;top:358px;width:21.5px;height:20px;background:#1c1c1c"></div>
<div class="a" style="left:426px;top:358px;width:1px;height:20px;background:#3a3a3a"></div><div class="a" style="left:448px;top:358px;width:1px;height:20px;background:#3a3a3a"></div>
<svg class="a" style="left:404px;top:357px" width="68" height="22" viewBox="0 0 68 22">
<path d="M5 4 H10 V12 H17 V17.5 H5 Z" fill="#fff"/><path d="M7.5 4 V15 H17" stroke="#1c1c1c" stroke-width="1.2" fill="none"/><circle cx="7.5" cy="15" r="1.2" fill="#1c1c1c"/>
<path d="M28.5 5 V16 H38" stroke="#6a6a6a" stroke-width="3.2" fill="none"/><path d="M27 4.5 V17 H38" stroke="#4a4a4a" stroke-width="0.8" fill="none"/><circle cx="27" cy="17" r="1.2" fill="#777"/>
<path d="M52 5 V16 H62" stroke="#6a6a6a" stroke-width="3.5" fill="none"/><circle cx="52" cy="14" r="1.2" fill="#323232"/>
</svg>
<div class="a" style="left:345px;top:384.5px;width:218px;height:1px;background:#3c3c3c"></div>
<div class="a" style="left:345px;top:396.5px;width:12px;height:11.5px;background:#9c9c9c;border-radius:1.5px;border:1px solid #b0b0b0"></div>
<svg class="a" style="left:345.5px;top:396.8px" width="11" height="11" viewBox="0 0 11 11"><path d="M2.2 5.5 L4.5 7.8 L8.8 3.2" stroke="#2a2a2a" stroke-width="1.7" fill="none"/></svg>
<div class="t" style="left:362px;top:397px;font-size:12px;color:#d0d0d0;">虚线</div>
<div class="a" style="left:487.4px;top:392px;width:75.4px;height:20.5px;border:1px solid #3a3a3a;border-radius:3px;background:#2e2e2e"></div>
<div class="a" style="left:526px;top:392.5px;width:36.3px;height:19.5px;background:#1c1c1c;border-radius:0 3px 3px 0"></div>
<svg class="a" style="left:484px;top:388px" width="84" height="30" viewBox="0 0 84 30">
<path d="M9 9.5 H16 M20.5 9.5 H29 M33 9.5 H35.5 M34.5 8.5 V14.5 M9 19 H11 M10 13 V19 M14.5 19 H23 M27.5 19 H35.5" stroke="#b4b4b4" stroke-width="2" fill="none"/>
<path d="M47.5 13 V9 H52 M56.5 9 H65.5 M70 9 H74.5 V13 M47.5 15 V19 H52 M56.5 19 H65.5 M70 19 H74.5 V15" stroke="#fff" stroke-width="2" fill="none"/>
</svg>
<div class="a" style="left:345px;top:418px;width:33px;height:20px;background:#222;border:1px solid #2c2c2c;border-radius:3px"></div>
<div class="t" style="left:349.5px;top:441px;font-size:12px;color:#a8a8a8;">虚线</div>
<div class="a" style="left:381.5px;top:418px;width:33px;height:20px;background:#222;border:1px solid #2c2c2c;border-radius:3px"></div>
<div class="t" style="left:386.0px;top:441px;font-size:12px;color:#a8a8a8;">间隙</div>
<div class="a" style="left:418.4px;top:418px;width:33px;height:20px;background:#222;border:1px solid #2c2c2c;border-radius:3px"></div>
<div class="t" style="left:422.9px;top:441px;font-size:12px;color:#a8a8a8;">虚线</div>
<div class="a" style="left:455.3px;top:418px;width:33px;height:20px;background:#222;border:1px solid #2c2c2c;border-radius:3px"></div>
<div class="t" style="left:459.8px;top:441px;font-size:12px;color:#a8a8a8;">间隙</div>
<div class="a" style="left:492.2px;top:418px;width:33px;height:20px;background:#222;border:1px solid #2c2c2c;border-radius:3px"></div>
<div class="t" style="left:496.7px;top:441px;font-size:12px;color:#a8a8a8;">虚线</div>
<div class="a" style="left:529.5px;top:418px;width:33px;height:20px;background:#222;border:1px solid #2c2c2c;border-radius:3px"></div>
<div class="t" style="left:534.0px;top:441px;font-size:12px;color:#a8a8a8;">间隙</div>
<div class="t" style="left:348px;top:422px;font-size:11px;color:#e0e0e0;font-family:'Liberation Mono',monospace">8 pt</div>
<div class="t" style="left:384.5px;top:422px;font-size:11px;color:#e0e0e0;font-family:'Liberation Mono',monospace">3 pt</div>
<div class="a" style="left:345px;top:459px;width:218px;height:1px;background:#3c3c3c"></div>
<div class="t" style="left:368px;top:471px;font-size:12px;color:#a8a8a8;">箭头 :</div>
<div class="a" style="left:404.8px;top:467.8px;width:56px;height:19.5px;background:#2a2a2a;border:1px solid #3a3a3a;border-radius:3px"></div>
<div class="a" style="left:404.8px;top:467.8px;width:37.5px;height:19.5px;background:#ededed"></div>
<div class="a" style="left:410.8px;top:476px;width:26px;height:3px;background:#000"></div>
<svg class="a" style="left:446px;top:475px" width="9" height="6" viewBox="0 0 9 6"><path d="M1 1 L4.5 4.5 L8 1" stroke="#d0d0d0" stroke-width="1.5" fill="none"/></svg>
<div class="a" style="left:467.4px;top:467.8px;width:56px;height:19.5px;background:#2a2a2a;border:1px solid #3a3a3a;border-radius:3px"></div>
<div class="a" style="left:467.4px;top:467.8px;width:37.5px;height:19.5px;background:#ededed"></div>
<div class="a" style="left:473.4px;top:476px;width:26px;height:3px;background:#000"></div>
<svg class="a" style="left:509px;top:475px" width="9" height="6" viewBox="0 0 9 6"><path d="M1 1 L4.5 4.5 L8 1" stroke="#d0d0d0" stroke-width="1.5" fill="none"/></svg>
<svg class="a" style="left:545px;top:470px" width="15" height="15" viewBox="0 0 15 15"><path d="M1 5 H13 M10 2 L13 5 M14 10 H2 M5 13 L2 10" stroke="#6a6a6a" stroke-width="1.6" fill="none"/></svg>
<div class="t" style="left:368px;top:501px;font-size:12px;color:#5c5c5c;">缩放 :</div>
<div class="a" style="left:404.8px;top:497px;width:56px;height:20px;border:1px solid #3a3a3a;border-radius:3px;background:#343434"></div>
<div class="a" style="left:422.8px;top:497px;width:1px;height:20px;background:#3a3a3a"></div>
<svg class="a" style="left:408.8px;top:499px" width="11" height="16" viewBox="0 0 11 16"><path d="M2 5.5 L5.5 2 L9 5.5 M2 10.5 L5.5 14 L9 10.5" stroke="#5a5a5a" stroke-width="1.2" fill="none"/></svg>
<div class="t" style="left:425.8px;top:501px;font-size:11px;color:#5c5c5c;">100%</div>
<div class="a" style="left:467.4px;top:497px;width:56px;height:20px;border:1px solid #3a3a3a;border-radius:3px;background:#343434"></div>
<div class="a" style="left:485.4px;top:497px;width:1px;height:20px;background:#3a3a3a"></div>
<svg class="a" style="left:471.4px;top:499px" width="11" height="16" viewBox="0 0 11 16"><path d="M2 5.5 L5.5 2 L9 5.5 M2 10.5 L5.5 14 L9 10.5" stroke="#5a5a5a" stroke-width="1.2" fill="none"/></svg>
<div class="t" style="left:488.4px;top:501px;font-size:11px;color:#5c5c5c;">100%</div>
<svg class="a" style="left:544px;top:499px" width="16" height="17" viewBox="0 0 16 17"><path d="M4 6 C2 8 2 11 4.5 13 C6.5 14.5 8.5 13.5 9.5 12 M12 11 C14 9 14 6 11.5 4 C9.5 2.5 7.5 3.5 6.5 5 M2 2 L14 15" stroke="#5e5e5e" stroke-width="1.6" fill="none"/></svg>
<div class="t" style="left:368px;top:530px;font-size:12px;color:#5c5c5c;">对齐 :</div>
<div class="a" style="left:404.8px;top:526px;width:44px;height:21.5px;border:1px solid #3a3a3a;border-radius:3px"></div>
<div class="a" style="left:426.5px;top:526px;width:1px;height:21.5px;background:#3a3a3a"></div>
<svg class="a" style="left:404px;top:526px" width="46" height="22" viewBox="0 0 46 22"><path d="M5 8 H14 M5 13 H16 M13 10 L16 13 L13 16 M14 6 V10" stroke="#5a5a5a" stroke-width="1.3" fill="none"/><path d="M27 8 H38 M27 13 H38 M35 10 L38 13 L35 16 M38 6 V10" stroke="#5a5a5a" stroke-width="1.3" fill="none"/></svg>
<div class="a" style="left:345px;top:553px;width:218px;height:1px;background:#3c3c3c"></div>
<div class="t" style="left:344px;top:566px;font-size:12px;color:#a8a8a8;">配置文件 :</div>
<div class="a" style="left:404.6px;top:562px;width:100px;height:19px;background:#ededed"></div>
<div class="a" style="left:410.7px;top:571px;width:48px;height:3px;background:#000"></div>
<div class="t" style="left:464px;top:566px;font-size:12px;color:#222;">等比</div>
<div class="a" style="left:575px;top:545px;width:18px;height:21px;background:#383838"></div>
<svg class="a" style="left:578px;top:547px" width="11" height="17" viewBox="0 0 11 17"><path d="M2 6 L5.5 2.5 L9 6 M2 11 L5.5 14.5 L9 11" stroke="#5a5a5a" stroke-width="1.2" fill="none"/></svg>
<div class="a" style="left:339px;top:589px;width:231px;height:8px;background:#2a2a2a;overflow:hidden"><div class="t" style="left:40px;top:-3px;font-size:12px;color:#bbb">选择</div></div>
<div class="a" style="left:484px;top:532px;width:86px;height:65px;border-radius:36px 0 0 36px;background:#303030;overflow:hidden">
 <div class="a" style="left:28px;top:13px;width:57px;height:21px;background:#363636;border-radius:3px"></div>
 <div class="a" style="left:47px;top:13px;width:1px;height:21px;background:#3a3a3a"></div>
 <svg class="a" style="left:32px;top:15px" width="11" height="17" viewBox="0 0 11 17"><path d="M2 6 L5.5 2.5 L9 6 M2 11 L5.5 14.5 L9 11" stroke="#5a5a5a" stroke-width="1.2" fill="none"/></svg>
 <div class="t" style="left:50px;top:18px;font-size:11px;color:#5c5c5c">100%</div>
 <div class="t" style="left:4px;top:17px;font-size:12px;color:#5c5c5c">放 :</div>
 <div class="t" style="left:4px;top:46px;font-size:12px;color:#5c5c5c">齐 :</div>
 <div class="a" style="left:28px;top:42.5px;width:44px;height:24px;border:1px solid #3a3a3a;border-radius:3px"></div>
 <div class="a" style="left:50px;top:42.5px;width:1px;height:24px;background:#3a3a3a"></div>
 <svg class="a" style="left:28px;top:44px" width="46" height="22" viewBox="0 0 46 22"><path d="M5 8 H14 M5 13 H16 M13 10 L16 13 L13 16 M14 6 V10" stroke="#5a5a5a" stroke-width="1.3" fill="none"/><path d="M27 8 H38 M27 13 H38 M35 10 L38 13 L35 16 M38 6 V10" stroke="#5a5a5a" stroke-width="1.3" fill="none"/></svg>
 <div class="a" style="left:26px;top:60px;width:42px;height:5px;background:#282828"></div>
 <div class="a" style="left:0;top:55px;width:98px;height:1px;background:#262626"></div>
</div>
<div class="a" style="left:478px;top:551px;width:5px;height:12px;background:#e4e4e4"></div>
<div class="a" style="left:478px;top:551px;width:12px;height:4px;background:#e4e4e4"></div>
<div class="a" style="left:480px;top:563px;width:2px;height:10px;background:#9a9a9a"></div>
<div class="t" style="left:478px;top:575px;font-size:12px;color:#d8d8d8">jh</div>
<svg class="a" style="left:496px;top:588px" width="8" height="8" viewBox="0 0 8 8"><path d="M1 7 L7 1 L7 7 Z" fill="#d0d0d0"/></svg>
<div class="a" style="left:523px;top:535px;width:7px;height:7px;border-radius:50%;background:#c8c8c8"></div>
<svg class="a" style="left:530px;top:530px" width="30" height="12" viewBox="0 0 30 12"><path d="M1 8 C8 3 18 3 26 4" stroke="#484848" stroke-width="1.2" fill="none"/></svg>
<!-- TOOLTIP -->
<div class="a" style="left:438.5px;top:340.5px;width:60.5px;height:21px;background:#f8f8f8;border:1px solid #6a6a6a;box-shadow:1px 1px 2px rgba(0,0,0,0.45)"></div>
<div class="t" style="left:444.5px;top:345px;font-size:12px;color:#303030">圆头端点</div>
<!-- ANNOTATIONS -->
<svg class="a" style="left:0;top:0" width="623" height="602" viewBox="0 0 623 602">
<rect x="342.7" y="238.1" width="42.4" height="34.7" fill="none" stroke="#f23a3a" stroke-width="3.4"/>
<rect x="424.7" y="299.6" width="29.8" height="33.5" fill="none" stroke="#f23a3a" stroke-width="3.4"/>
<path d="M355 276 L362 291.5 L358.5 291.5 L352.5 320.5 L350.5 291.5 L346 291 Z" fill="#f23a3a"/>
<path d="M463.5 306.7 L480.8 301.3 L479.5 306.5 L529.5 314.2 L478.5 312.5 L479 315.7 Z" fill="#f23a3a"/>
<path d="M567.9 371.9 L549.3 367.9 L550.4 372.4 L516.2 384.8 L552.1 380.3 L553.3 383.7 Z" fill="#f23a3a"/>
</svg>
<div class="a" style="left:0;top:0;width:3px;height:1px;background:#fff"></div><div class="a" style="left:0;top:0;width:1px;height:3px;background:#fff"></div>
<div class="a" style="left:619px;top:0;width:4px;height:1px;background:#fff"></div><div class="a" style="left:621px;top:0;width:2px;height:3px;background:#fff"></div>
</body></html>
